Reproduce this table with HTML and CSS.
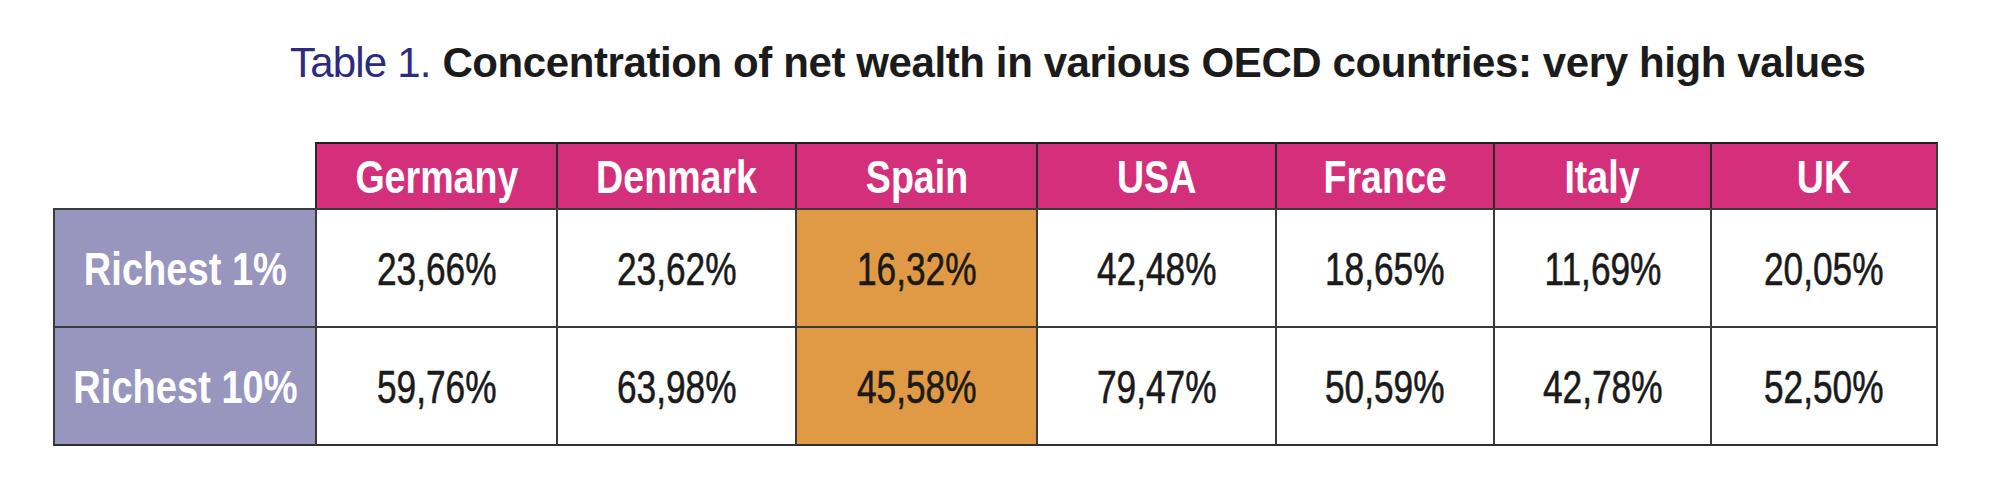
FILE: index.html
```html
<!DOCTYPE html>
<html lang="en">
<head>
<meta charset="utf-8">
<title>Table 1</title>
<link rel="stylesheet" href="styles.css">
</head>
<body>
<div class="page">
  <h1 class="title"><span class="title-label">Table 1.</span> <span class="title-text">Concentration of net wealth in various OECD countries: very high values</span></h1>
  <div class="wealth-table">
    <div class="cell corner"></div>
    <div class="cell head"><span class="txt">Germany</span></div>
    <div class="cell head"><span class="txt">Denmark</span></div>
    <div class="cell head"><span class="txt">Spain</span></div>
    <div class="cell head"><span class="txt">USA</span></div>
    <div class="cell head"><span class="txt">France</span></div>
    <div class="cell head"><span class="txt">Italy</span></div>
    <div class="cell head last"><span class="txt">UK</span></div>

    <div class="cell rowhead"><span class="txt">Richest 1%</span></div>
    <div class="cell val"><span class="txt">23,66%</span></div>
    <div class="cell val"><span class="txt">23,62%</span></div>
    <div class="cell val hl"><span class="txt">16,32%</span></div>
    <div class="cell val"><span class="txt">42,48%</span></div>
    <div class="cell val"><span class="txt">18,65%</span></div>
    <div class="cell val"><span class="txt">11,69%</span></div>
    <div class="cell val last"><span class="txt">20,05%</span></div>

    <div class="cell rowhead bottom"><span class="txt">Richest 10%</span></div>
    <div class="cell val bottom"><span class="txt">59,76%</span></div>
    <div class="cell val bottom"><span class="txt">63,98%</span></div>
    <div class="cell val hl bottom"><span class="txt">45,58%</span></div>
    <div class="cell val bottom"><span class="txt">79,47%</span></div>
    <div class="cell val bottom"><span class="txt">50,59%</span></div>
    <div class="cell val bottom"><span class="txt">42,78%</span></div>
    <div class="cell val last bottom"><span class="txt">52,50%</span></div>
  </div>
</div>
</body>
</html>
```

FILE: styles.css
```css
html, body {
  margin: 0;
  padding: 0;
  background: #ffffff;
}

.page {
  padding-top: 39px;
}

.title {
  margin: 0 0 55px 290px;
  font-family: "Liberation Sans", Arial, sans-serif;
  font-size: 42px;
  line-height: 48px;
  font-weight: normal;
  white-space: nowrap;
  color: #1b1b1b;
}

.title-label {
  color: #2d2a80;
  letter-spacing: -0.8px;
}

.title-text {
  font-weight: bold;
  letter-spacing: -0.4px;
}

.wealth-table {
  margin-left: 53px;
  display: grid;
  grid-template-columns: 262px 241px 239px 241px 239px 218px 217px 228px;
  grid-template-rows: 66px 118px 120px;
  width: max-content;
  font-family: "Liberation Sans", Arial, sans-serif;
  font-size: 47px;
}

.cell {
  box-sizing: border-box;
  display: flex;
  align-items: center;
  justify-content: center;
  border-left: 2px solid #3a3a3a;
  border-top: 2px solid #3a3a3a;
  white-space: nowrap;
}

.txt {
  display: inline-block;
  transform: scaleX(0.8);
  transform-origin: center;
}

.cell.last {
  border-right: 2px solid #3a3a3a;
}

.cell.bottom {
  border-bottom: 2px solid #2e2e2e;
}

.corner {
  border: none;
  background: #ffffff;
}

.head {
  background: #d42f7b;
  color: #ffffff;
  font-weight: bold;
  border-top-color: #1e1e1e;
  border-left-color: #2a2a2a;
}

.rowhead {
  background: #9896bf;
  color: #ffffff;
  font-weight: bold;
}

.rowhead .txt {
  transform: scaleX(0.81);
}

.val {
  background: #ffffff;
  color: #1a1a1a;
}

.val .txt {
  transform: scaleX(0.75);
  -webkit-text-stroke: 0.6px #1a1a1a;
}

.val.hl {
  background: #e09a45;
}
```
